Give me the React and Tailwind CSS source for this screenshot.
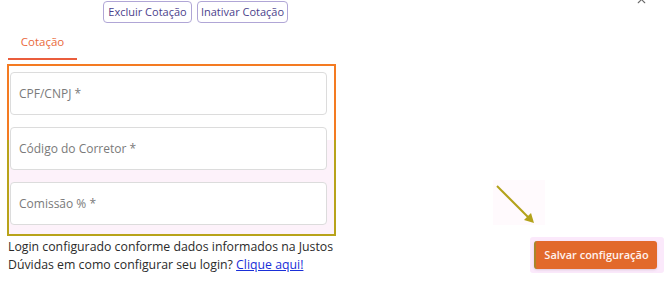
import { X } from 'lucide-react'

function Field({ label }) {
  return (
    <div className="flex h-[43px] items-center rounded-[4px] border border-[#dcdcdc] bg-white px-[8px] text-[12px] text-[#7a7a7a]">
      {label}
    </div>
  )
}

export default function App() {
  return (
    <div className="relative h-[287px] w-[670px] overflow-hidden bg-white font-['Open_Sans',sans-serif]">
      <X className="absolute left-[635px] top-[-7px] h-[13px] w-[13px] text-[#6b6b6b]" strokeWidth={2} />

      <div className="flex">
        <div className="w-[340px] shrink-0">
          <div className="flex gap-[5px] pl-[103px] pt-[1px]">
            <button className="h-[22px] w-[89px] rounded-[4px] border border-[#b0a6d6] text-[11px] text-[#4b3f8c]">
              Excluir Cotação
            </button>
            <button className="h-[22px] w-[91px] rounded-[4px] border border-[#b0a6d6] text-[11px] text-[#4b3f8c]">
              Inativar Cotação
            </button>
          </div>

          <div className="ml-[8px] mt-[11px] w-[69px] border-b-2 border-[#ea5d3c] pb-[8px] text-center text-[11.5px] leading-[16px] text-[#ea6a3c]">
            Cotação
          </div>

          <div className="ml-[7px] mt-[4px] w-[329px] bg-[linear-gradient(to_bottom,#f47b22_0,#f47b22_76px,#b8a31a_76px)] p-[2px]">
            <div className="flex flex-col gap-[12px] bg-[linear-gradient(to_bottom,#ffffff_0,#ffffff_74px,#fdf2fa_74px)] pb-[9px] pl-[1px] pr-[7px] pt-[6px]">
              <Field label="CPF/CNPJ *" />
              <Field label="Código do Corretor *" />
              <Field label="Comissão % *" />
            </div>
          </div>

          <div className="pl-[8px] pt-[2px] text-[12.3px] leading-[18px] text-[#2b2b2b]">
            <p>Login configurado conforme dados informados na Justos</p>
            <p>
              Dúvidas em como configurar seu login?{' '}
              <a href="#" className="text-[#1a2fd8] underline">Clique aqui!</a>
            </p>
          </div>
        </div>

        <div className="relative flex-1">
          <div className="absolute left-[153px] top-[180px] h-[45px] w-[52px] bg-[#fffafd]" />
          <svg className="absolute left-[155px] top-[184px]" width="42" height="42" viewBox="0 0 42 42">
            <line x1="2" y1="2" x2="36" y2="36" stroke="#b3a21a" strokeWidth="2" />
            <polygon points="39,39 29,36 36,29" fill="#b3a21a" />
          </svg>
          <div className="absolute left-[190px] top-[237px] rounded-[3px] bg-[#fbe9fb] p-[4px] pr-[7px]">
            <button className="h-[28px] w-[123px] rounded-[3px] border-l-2 border-[#a8862a] bg-[#e2692b] text-[11px] font-semibold text-[#fff2ee] shadow-sm">
              Salvar configuração
            </button>
          </div>
        </div>
      </div>
    </div>
  )
}
